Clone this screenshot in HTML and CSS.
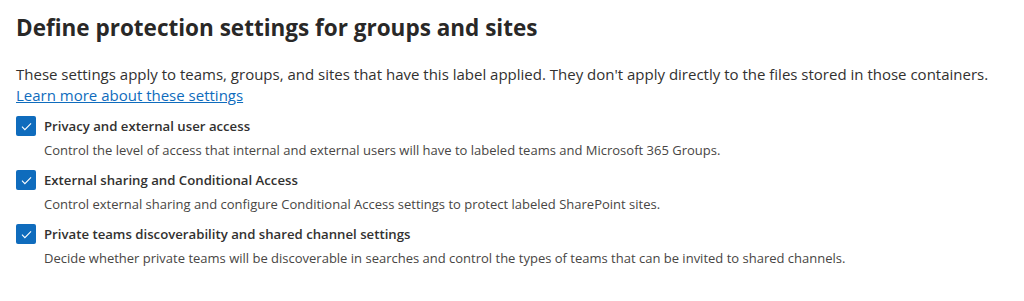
FILE: index.html
```html
<!DOCTYPE html>
<html lang="en">
<head>
  <meta charset="UTF-8">
  <meta name="viewport" content="width=device-width, initial-scale=1.0">
  <title>Define protection settings</title>
  <link rel="stylesheet" href="styles.css">
</head>
<body>
  <main class="panel">
    <h1 class="panel-title">Define protection settings for groups and sites</h1>

    <p class="intro">
      These settings apply to teams, groups, and sites that have this label applied. They don't apply directly to the files stored in those containers.<br>
      <a href="#" class="intro-link">Learn more about these settings</a>
    </p>

    <ul class="options">
      <li class="option">
        <label class="option-row">
          <span class="check">
            <svg viewBox="0 0 12 12" width="13" height="13"><path d="M1.8 6.2l2.7 2.7 5.7-5.8" fill="none" stroke="#fff" stroke-width="1"/></svg>
          </span>
          <span class="option-title">Privacy and external user access</span>
        </label>
        <p class="option-desc">Control the level of access that internal and external users will have to labeled teams and Microsoft 365 Groups.</p>
      </li>
      <li class="option">
        <label class="option-row">
          <span class="check">
            <svg viewBox="0 0 12 12" width="13" height="13"><path d="M1.8 6.2l2.7 2.7 5.7-5.8" fill="none" stroke="#fff" stroke-width="1"/></svg>
          </span>
          <span class="option-title">External sharing and Conditional Access</span>
        </label>
        <p class="option-desc">Control external sharing and configure Conditional Access settings to protect labeled SharePoint sites.</p>
      </li>
      <li class="option">
        <label class="option-row">
          <span class="check">
            <svg viewBox="0 0 12 12" width="13" height="13"><path d="M1.8 6.2l2.7 2.7 5.7-5.8" fill="none" stroke="#fff" stroke-width="1"/></svg>
          </span>
          <span class="option-title">Private teams discoverability and shared channel settings</span>
        </label>
        <p class="option-desc">Decide whether private teams will be discoverable in searches and control the types of teams that can be invited to shared channels.</p>
      </li>
    </ul>
  </main>
</body>
</html>
```

FILE: styles.css
```css
body {
  margin: 0;
  font-family: "Open Sans", sans-serif;
  color: #323130;
  background-color: #fff;
}

.panel {
  padding: 12px 16px 0 16px;
}

.panel-title {
  margin: 0;
  font-size: 22.5px;
  line-height: 32px;
  font-weight: 700;
  color: #292827;
}

.intro {
  margin: 20px 0 10px 0;
  font-size: 15px;
  line-height: 21px;
}

.intro-link {
  color: #0f6cbd;
  text-decoration: underline;
}

.options {
  list-style: none;
  margin: 0;
  padding: 0;
}

.option {
  margin-bottom: 10px;
}

.option-row {
  display: flex;
  align-items: center;
  gap: 8px;
}

.check {
  width: 20px;
  height: 20px;
  box-sizing: border-box;
  border-radius: 2px;
  background-color: #0f6cbd;
  display: flex;
  align-items: center;
  justify-content: center;
}

.option-title {
  font-size: 13.2px;
  line-height: 20px;
  font-weight: 600;
}

.option-desc {
  margin: 4px 0 0 28px;
  font-size: 13px;
  line-height: 20px;
  color: #484644;
}
```
